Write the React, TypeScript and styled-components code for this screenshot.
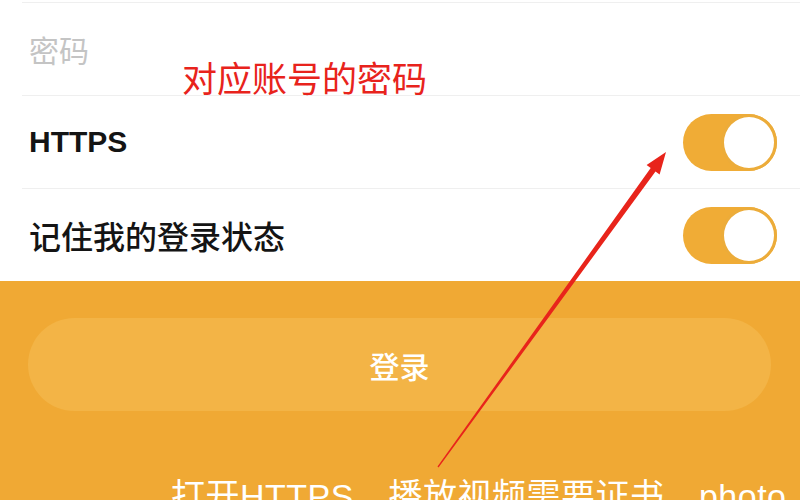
import React from 'react';
import styled, { createGlobalStyle } from 'styled-components';

const GlobalStyle = createGlobalStyle`
  html, body {
    margin: 0;
    padding: 0;
    width: 800px;
    height: 500px;
    overflow: hidden;
    background: #fff;
  }
  * { box-sizing: border-box; }
`;

const FONT = `"Liberation Sans", "Noto Sans CJK SC", sans-serif`;
const CJK = `"Noto Sans CJK SC", sans-serif`;

const Page = styled.div`
  position: relative;
  width: 800px;
  height: 500px;
  overflow: hidden;
  display: flex;
  flex-direction: column;
  font-family: ${FONT};
`;

const Form = styled.div`
  background: #fff;
  padding-top: 2px;
  height: 283px;
  display: flex;
  flex-direction: column;
`;

const Row = styled.div`
  height: 93px;
  margin-left: 22px;
  padding: 0 23px 0 7px;
  border-top: 1px solid #efefef;
  display: flex;
  align-items: center;
  justify-content: space-between;
`;

const Placeholder = styled.span`
  font-family: ${CJK};
  font-size: 30px;
  color: #c4c4c4;
  font-weight: 400;
`;

const Label = styled.span<{ $latin?: boolean }>`
  font-family: ${p => (p.$latin ? FONT : CJK)};
  font-size: ${p => (p.$latin ? '30px' : '32px')};
  font-weight: ${p => (p.$latin ? 700 : 500)};
  color: #141414;
`;

const Switch = styled.div<{ $on: boolean }>`
  width: 94px;
  height: 57px;
  border-radius: 29px;
  background: ${p => (p.$on ? '#f0ac36' : '#e5e5e5')};
  display: flex;
  align-items: center;
  justify-content: ${p => (p.$on ? 'flex-end' : 'flex-start')};
`;

const Knob = styled.div`
  width: 56px;
  height: 57px;
  border-radius: 50%;
  background: #fff;
  border: 3px solid #ecac3a;
`;

const Footer = styled.div`
  flex: 1;
  background: #f0a934;
  padding: 37px 29px 0 28px;
  display: flex;
  flex-direction: column;
`;

const LoginButton = styled.button`
  height: 93px;
  border: none;
  border-radius: 47px;
  background: #f3b446;
  color: #fff;
  font-family: ${CJK};
  font-size: 30px;
  font-weight: 500;
  display: flex;
  align-items: center;
  justify-content: center;
`;

const Caption = styled.div`
  margin: 68px 0 0 143px;
  font-family: ${FONT};
  font-size: 34px;
  letter-spacing: 0.5px;
  line-height: 34px;
  color: #fff;
  white-space: nowrap;
`;

const Annotation = styled.div`
  position: absolute;
  left: 182px;
  top: 55px;
  font-family: ${CJK};
  font-size: 35px;
  color: #e8231c;
  line-height: 44px;
`;

const ArrowLayer = styled.svg`
  position: absolute;
  left: 0;
  top: 0;
  pointer-events: none;
`;

function Toggle ({ on }: { on: boolean }) :React.ReactElement {
  return (
    <Switch $on={on}>
      <Knob />
    </Switch>
  );
}

export default function App () :React.ReactElement {
  return (
    <>
      <GlobalStyle />
      <Page>
        <Form>
          <Row>
            <Placeholder>密码</Placeholder>
          </Row>
          <Row>
            <Label $latin>HTTPS</Label>
            <Toggle on />
          </Row>
          <Row>
            <Label>记住我的登录状态</Label>
            <Toggle on />
          </Row>
        </Form>
        <Footer>
          <LoginButton>登录</LoginButton>
          <Caption>打开HTTPS，播放视频需要证书，photo</Caption>
        </Footer>
        <Annotation>对应账号的密码</Annotation>
        <ArrowLayer width="800" height="500" viewBox="0 0 800 500">
          <polygon
            points="437.5,466.6 438.5,467.4 655.5,171.6 659.6,174.5 666,152 646.6,165.1 650.7,168.0"
            fill="#e8241b"
          />
        </ArrowLayer>
      </Page>
    </>
  );
}
